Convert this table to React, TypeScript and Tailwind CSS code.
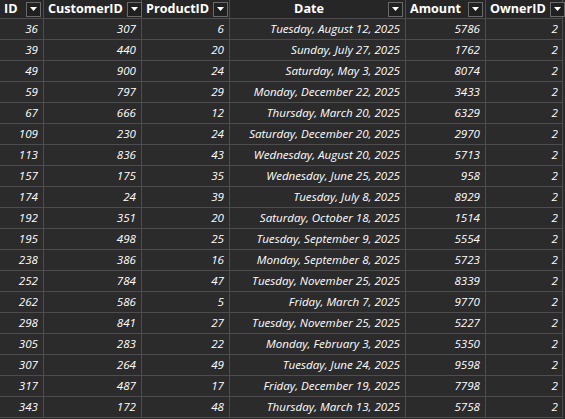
const rows: [number, number, number, string, number, number][] = [
  [36, 307, 6, 'Tuesday, August 12, 2025', 5786, 2],
  [39, 440, 20, 'Sunday, July 27, 2025', 1762, 2],
  [49, 900, 24, 'Saturday, May 3, 2025', 8074, 2],
  [59, 797, 29, 'Monday, December 22, 2025', 3433, 2],
  [67, 666, 12, 'Thursday, March 20, 2025', 6329, 2],
  [109, 230, 24, 'Saturday, December 20, 2025', 2970, 2],
  [113, 836, 43, 'Wednesday, August 20, 2025', 5713, 2],
  [157, 175, 35, 'Wednesday, June 25, 2025', 958, 2],
  [174, 24, 39, 'Tuesday, July 8, 2025', 8929, 2],
  [192, 351, 20, 'Saturday, October 18, 2025', 1514, 2],
  [195, 498, 25, 'Tuesday, September 9, 2025', 5554, 2],
  [238, 386, 16, 'Monday, September 8, 2025', 5723, 2],
  [252, 784, 47, 'Tuesday, November 25, 2025', 8339, 2],
  [262, 586, 5, 'Friday, March 7, 2025', 9770, 2],
  [298, 841, 27, 'Tuesday, November 25, 2025', 5227, 2],
  [305, 283, 22, 'Monday, February 3, 2025', 5350, 2],
  [307, 264, 49, 'Tuesday, June 24, 2025', 9598, 2],
  [317, 487, 17, 'Friday, December 19, 2025', 7798, 2],
  [343, 172, 48, 'Thursday, March 13, 2025', 5758, 2],
];

const cols = [
  { name: 'ID', center: false },
  { name: 'CustomerID', center: false },
  { name: 'ProductID', center: false },
  { name: 'Date', center: true },
  { name: 'Amount', center: false },
  { name: 'OwnerID', center: false },
];

function FilterButton() {
  return (
    <div className="flex h-[15px] w-[15px] shrink-0 items-center justify-center border border-[#6a6a6a] bg-[#202020]">
      <svg width="7" height="4" viewBox="0 0 7 4">
        <path d="M0 0h7L3.5 4z" fill="#ffffff" />
      </svg>
    </div>
  );
}

export default function App() {
  return (
    <div className="h-[419px] w-[565px] overflow-hidden bg-[#2b2b2b] font-['Open_Sans','Noto_Sans',sans-serif] text-[11.6px] text-white">
      <div className="grid w-[563px] grid-cols-[44px_98px_88px_176px_80px_77px] border-r border-[#4d4d4d]">
        {cols.map((c) => (
          <div
            key={c.name}
            className="flex h-[19px] items-center gap-1 border-b border-r border-[#4d4d4d] bg-[#262626] pl-[4px] pr-[2px] text-[12.6px] font-bold last:border-r-0"
          >
            <span className={c.center ? 'flex-1 text-center' : 'flex-1'}>{c.name}</span>
            <FilterButton />
          </div>
        ))}
        {rows.map((r) =>
          r.map((v, i) => (
            <div
              key={`${r[0]}-${i}`}
              className="flex h-[21px] items-center justify-end border-b border-r border-[#4d4d4d] pr-[5px] italic [&:nth-child(6n)]:border-r-0"
            >
              {v}
            </div>
          ))
        )}
      </div>
    </div>
  );
}
